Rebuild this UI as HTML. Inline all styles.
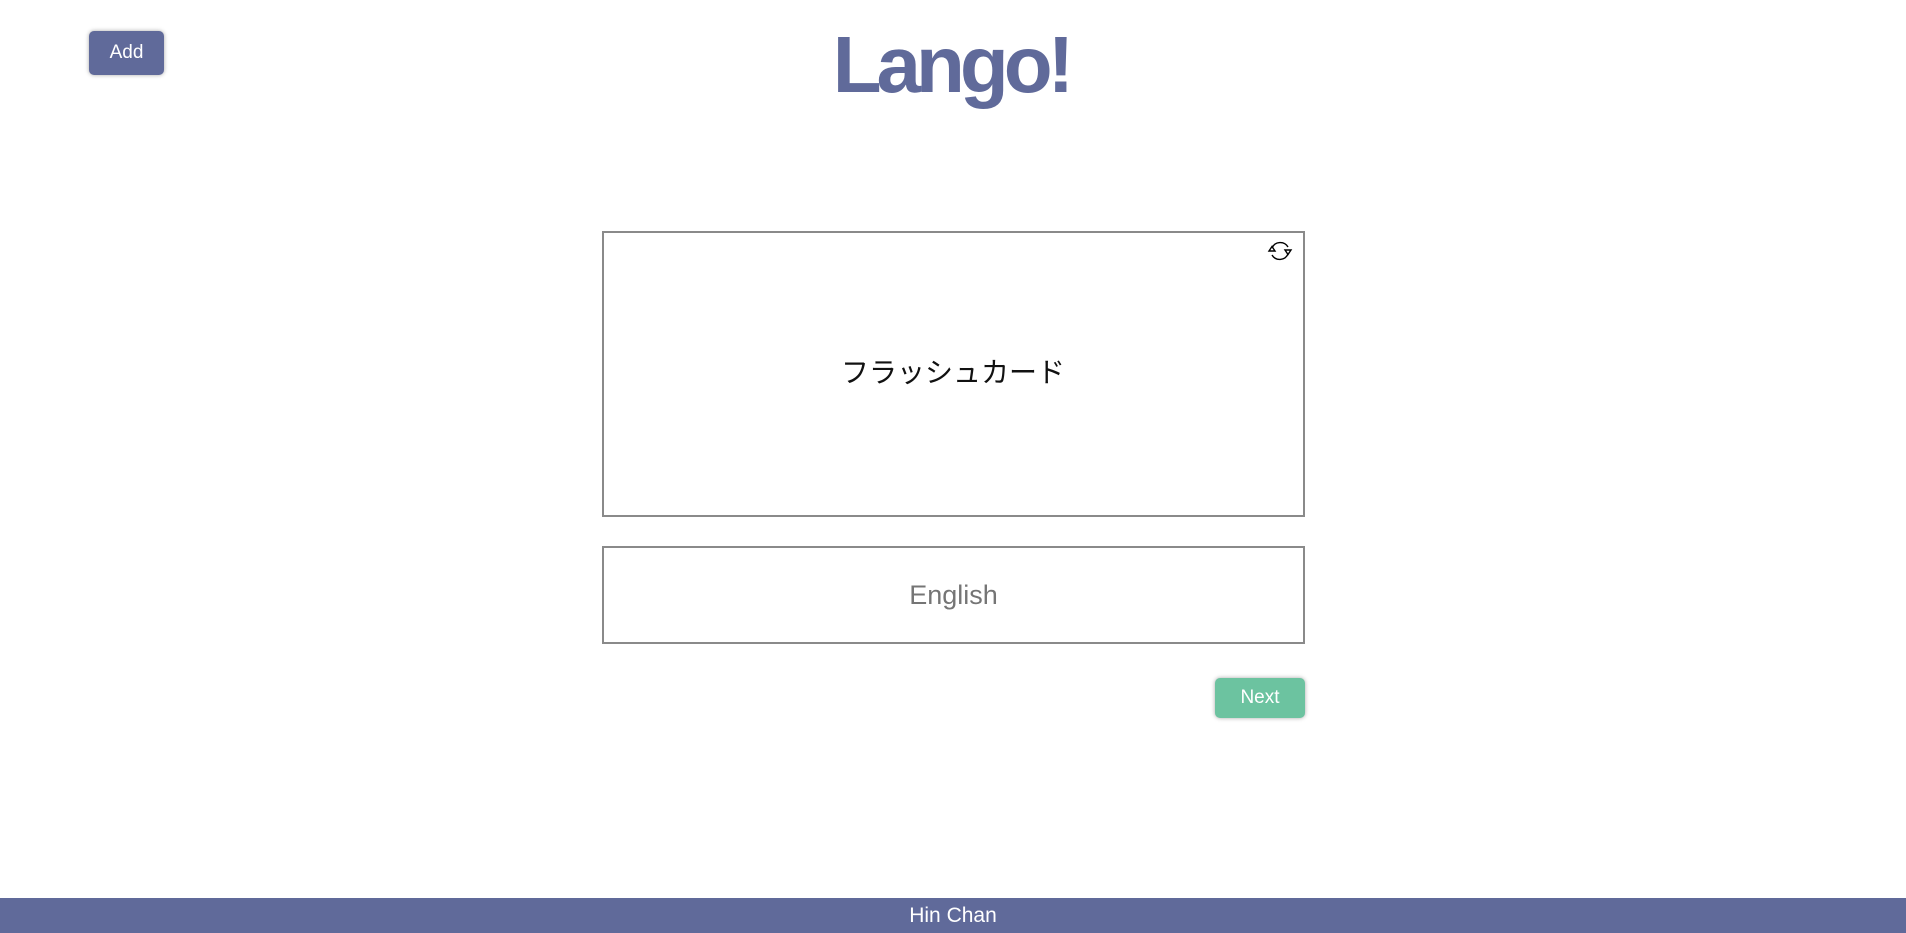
<!DOCTYPE html>
<html><head><meta charset="utf-8"><style>
html,body{margin:0;padding:0;width:1906px;height:933px;overflow:hidden;background:#fff;font-family:"Liberation Sans","Noto Sans CJK JP",sans-serif;position:relative}
.add{position:absolute;left:89px;top:31px;width:75px;height:44px;background:#606a9a;color:#fff;border-radius:5px;box-shadow:0 0 4px rgba(0,0,0,.35);font-size:19px;line-height:44px;text-align:center}
h1{position:absolute;left:0;width:1906px;top:20px;margin:0;text-align:center;font-size:80px;font-weight:bold;color:#606a9a;letter-spacing:-5px;line-height:90px;text-indent:-4px}
.card{position:absolute;left:602px;top:231px;width:699px;height:282px;border:2px solid #8a8a8a}
.jp{position:absolute;left:0;right:0;top:355px;text-align:center;font-size:28px;color:#111;line-height:36px}
.icon{position:absolute;left:1267px;top:238px}
.en{position:absolute;left:602px;top:546px;width:699px;height:94px;border:2px solid #8a8a8a;text-align:center;line-height:94px;font-size:27px;color:#757575}
.next{position:absolute;left:1215px;top:678px;width:90px;height:40px;background:#6cc3a0;color:#fff;border-radius:5px;box-shadow:0 0 4px rgba(0,0,0,.35);font-size:19px;line-height:40px;text-align:center}
.foot{position:absolute;left:0;top:898px;width:1906px;height:35px;background:#606a9a;color:#fff;text-align:center;font-size:21px;line-height:35px}
</style></head><body>
<div class="add">Add</div>
<h1>Lango!</h1>
<div class="card"></div>
<div class="jp">フラッシュカード</div>
<svg class="icon" width="26" height="26" viewBox="0 0 26 26" fill="none" stroke="#000" stroke-width="1.4">
<path d="M5 10 A9 9 0 0 1 21 9"/><path d="M21 16 A9 9 0 0 1 5 17"/>
<path d="M2 13 L5 8.5 L8 13 Z"/><path d="M18 12 L21 16.5 L24 12 Z"/>
</svg>
<div class="en">English</div>
<div class="next">Next</div>
<div class="foot">Hin Chan</div>
</body></html>
